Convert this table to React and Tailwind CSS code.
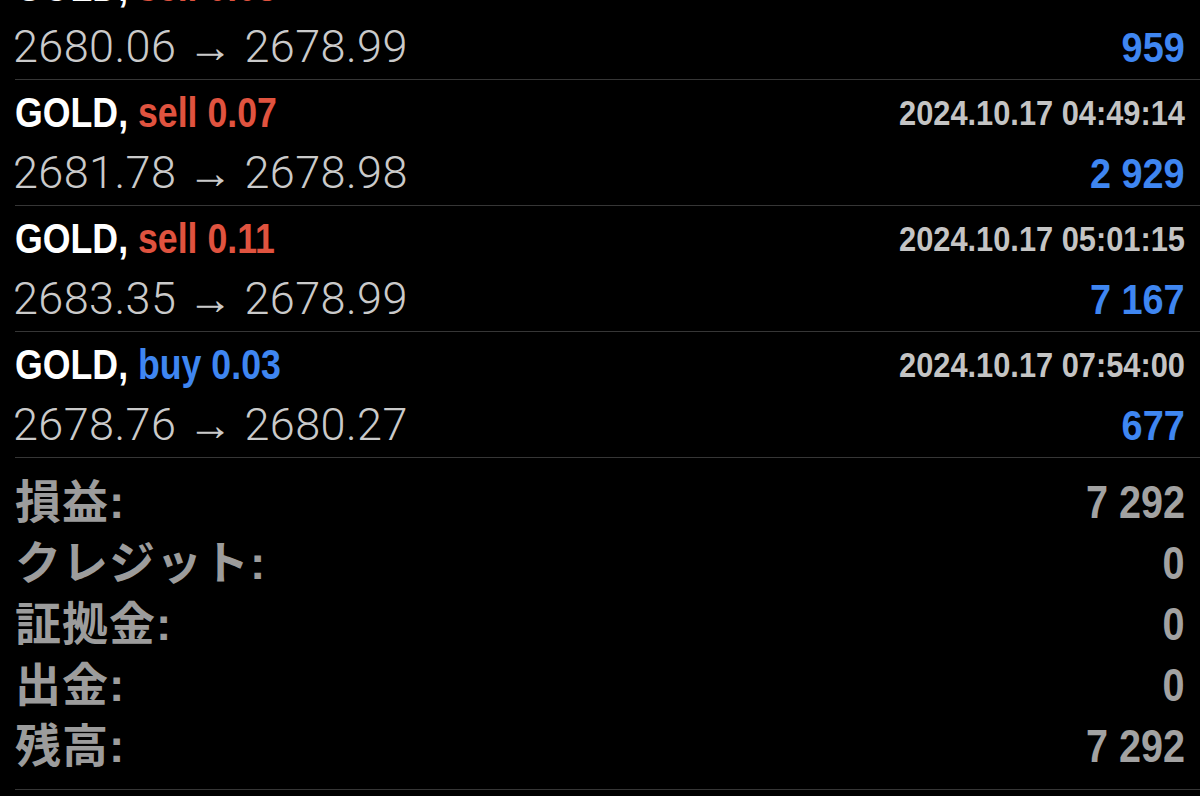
import React from "react";

const trades = [
  { side: "sell", lots: "0.08", time: "2024.10.17 04:31:02", open: "2680.06", close: "2678.99", profit: "959" },
  { side: "sell", lots: "0.07", time: "2024.10.17 04:49:14", open: "2681.78", close: "2678.98", profit: "2 929" },
  { side: "sell", lots: "0.11", time: "2024.10.17 05:01:15", open: "2683.35", close: "2678.99", profit: "7 167" },
  { side: "buy", lots: "0.03", time: "2024.10.17 07:54:00", open: "2678.76", close: "2680.27", profit: "677" },
];

const summary = [
  { label: "損益:", value: "7 292" },
  { label: "クレジット:", value: "0" },
  { label: "証拠金:", value: "0" },
  { label: "出金:", value: "0" },
  { label: "残高:", value: "7 292" },
];

const cond = { fontFamily: '"Liberation Sans", Arial, sans-serif' };
const light = { fontFamily: 'Roboto, "Liberation Sans", sans-serif' };
const jp = { fontFamily: '"Liberation Sans", "Noto Sans CJK JP", sans-serif' };

function TradeRow({ trade, first }) {
  return (
    <div className={`border-b border-[#363636] pr-[15px] pt-[3px] pb-[2px] ${first ? "-mt-[46px]" : ""}`}>
      <div className="flex items-center justify-between h-[60px]">
        <span
          style={cond}
          className="inline-block origin-left scale-x-[0.85] whitespace-nowrap text-[42px] leading-[60px] font-bold"
        >
          <span className="text-white">GOLD, </span>
          <span className={trade.side === "sell" ? "text-[#e0533f]" : "text-[#3f86f1]"}>
            {trade.side} {trade.lots}
          </span>
        </span>
        <span
          style={cond}
          className="inline-block origin-right scale-x-[0.88] whitespace-nowrap text-[35px] leading-[60px] font-bold text-[#c4c4c4]"
        >
          {trade.time}
        </span>
      </div>
      <div className="flex items-baseline justify-between h-[60px]">
        <span
          style={light}
          className="-ml-[2px] whitespace-nowrap text-[45px] leading-[60px] font-light tracking-[0.4px] text-[#cacaca]"
        >
          {trade.open} → {trade.close}
        </span>
        <span
          style={cond}
          className="inline-block origin-right scale-x-[0.88] whitespace-nowrap text-[43px] leading-[60px] font-bold text-[#3f86f1]"
        >
          {trade.profit}
        </span>
      </div>
    </div>
  );
}

export default function App() {
  return (
    <div className="h-[796px] w-[1200px] overflow-hidden bg-black pl-[15px]">
      {trades.map((t, i) => (
        <TradeRow key={t.time} trade={t} first={i === 0} />
      ))}

      <div className="border-b border-[#363636] pr-[15px] pt-[14px] pb-[12px]">
        {summary.map((row) => (
          <div key={row.label} className="flex items-baseline justify-between h-[61px]">
            <span
              style={jp}
              className="whitespace-nowrap text-[46px] leading-[61px] font-bold tracking-[1px] text-[#9c9c9c]"
            >
              {row.label}
            </span>
            <span
              style={cond}
              className="inline-block origin-right scale-x-[0.86] whitespace-nowrap text-[46px] leading-[61px] font-bold text-[#a2a2a2]"
            >
              {row.value}
            </span>
          </div>
        ))}
      </div>
    </div>
  );
}
